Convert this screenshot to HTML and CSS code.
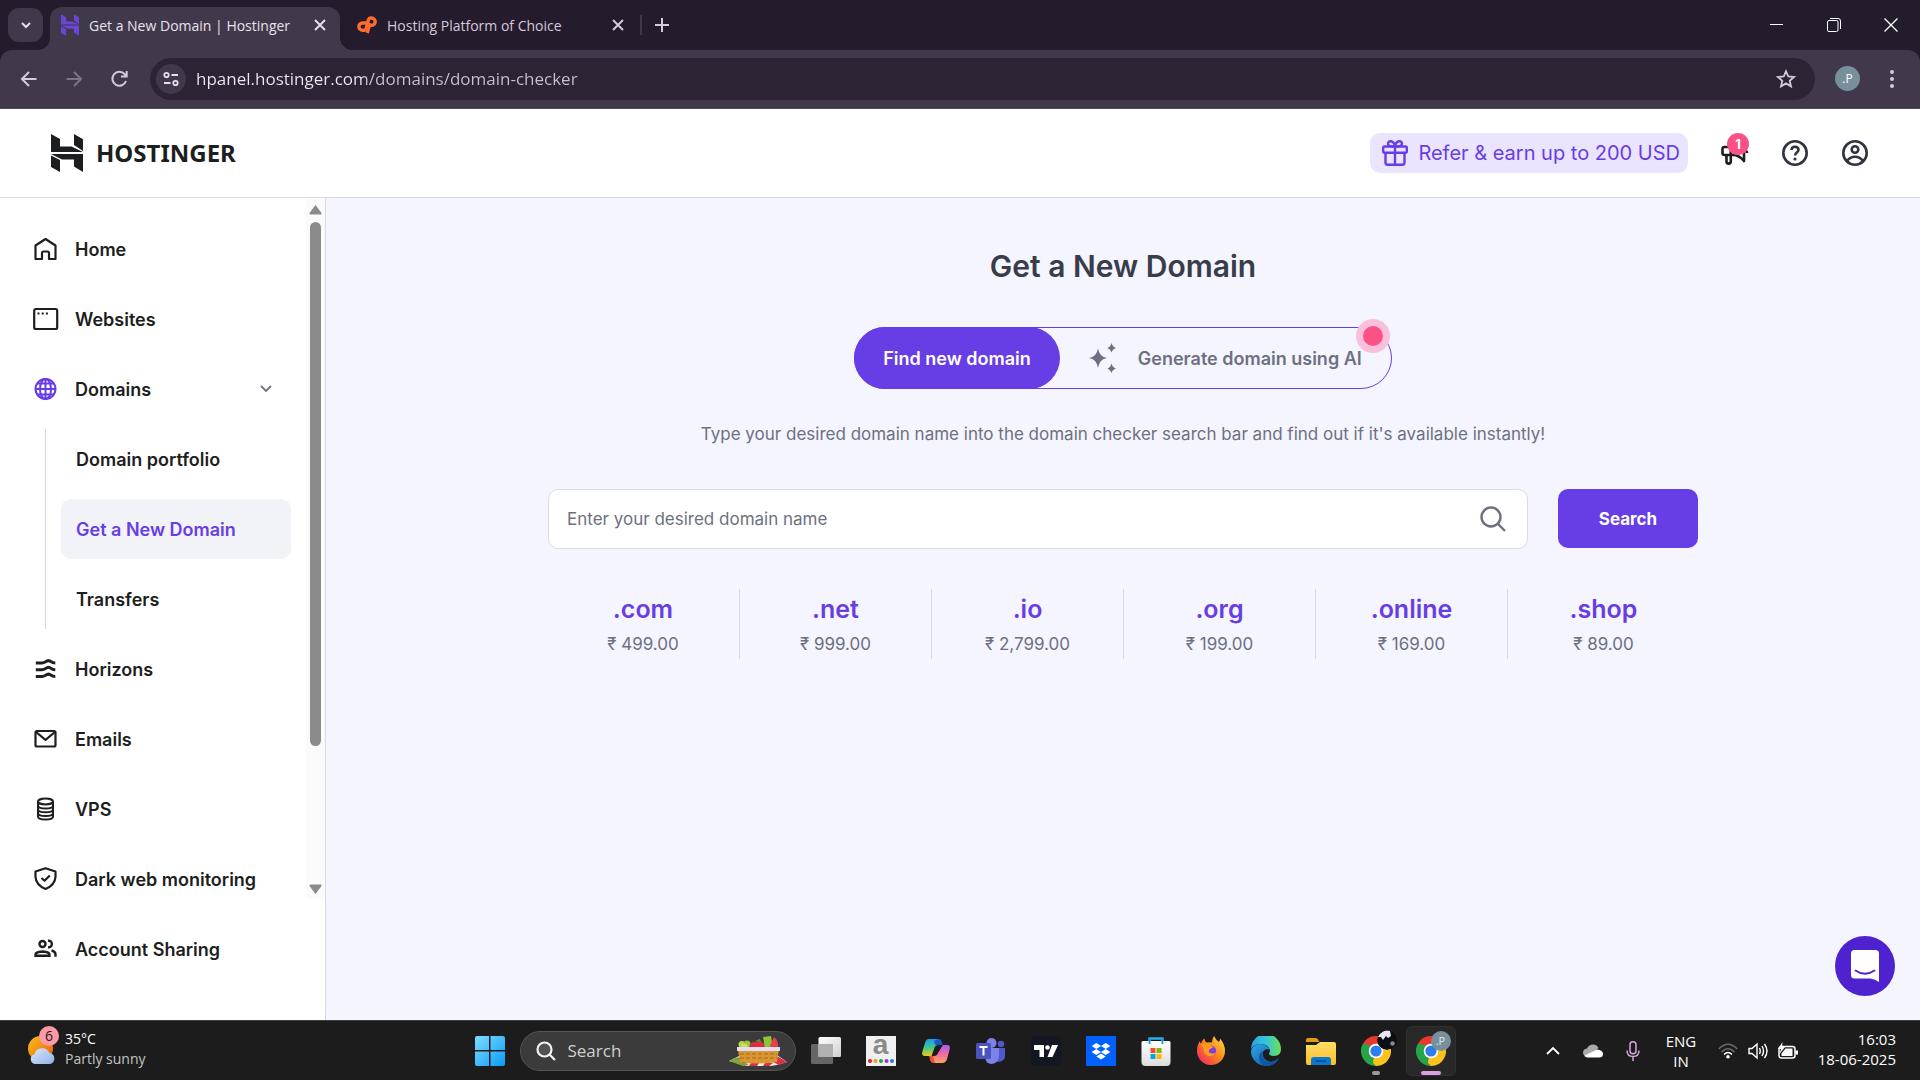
FILE: index.html
```html
<!DOCTYPE html>
<html lang="en">
<head>
<meta charset="utf-8">
<title>Get a New Domain | Hostinger</title>
<link rel="stylesheet" href="styles.css">
</head>
<body>
<svg class="defs" aria-hidden="true">
  <defs>
    <linearGradient id="gWin" x1="0" y1="0" x2="1" y2="1"><stop offset="0" stop-color="#7fdcff"/><stop offset="1" stop-color="#0a9bf7"/></linearGradient>
    <linearGradient id="gSun" x1="0" y1="0" x2="1" y2="1"><stop offset="0" stop-color="#f7c21f"/><stop offset="1" stop-color="#e8590c"/></linearGradient>
    <linearGradient id="gCloud" x1="0" y1="0" x2="1" y2="1"><stop offset="0" stop-color="#dbe8fa"/><stop offset="1" stop-color="#8fb2ea"/></linearGradient>
    <linearGradient id="gView" x1="0" y1="0" x2="1" y2="1"><stop offset="0" stop-color="#ffffff"/><stop offset="1" stop-color="#cfcfcf"/></linearGradient>
    <linearGradient id="gCopA" x1="0" y1="0" x2="0" y2="1"><stop offset="0" stop-color="#1a9df0"/><stop offset=".5" stop-color="#3fc98a"/><stop offset="1" stop-color="#f3c81c"/></linearGradient>
    <linearGradient id="gCopB" x1="0" y1="0" x2="0" y2="1"><stop offset="0" stop-color="#a65cf0"/><stop offset=".5" stop-color="#f06aa8"/><stop offset="1" stop-color="#ffa45a"/></linearGradient>
    <linearGradient id="gStore" x1="0" y1="0" x2="0" y2="1"><stop offset="0" stop-color="#ffffff"/><stop offset="1" stop-color="#dcdcdc"/></linearGradient>
    <linearGradient id="gFox" x1="1" y1="0" x2="0" y2="1"><stop offset="0" stop-color="#ffe14a"/><stop offset=".45" stop-color="#ff8a1c"/><stop offset="1" stop-color="#f5156c"/></linearGradient>
    <linearGradient id="gEdgeTop" x1="0" y1="0" x2="1" y2="0"><stop offset="0" stop-color="#2f9fe8"/><stop offset=".5" stop-color="#35c5dc"/><stop offset="1" stop-color="#6be04e"/></linearGradient>
    <linearGradient id="gEdgeLow" x1="0" y1="0" x2="1" y2="1"><stop offset="0" stop-color="#2fa8e8"/><stop offset="1" stop-color="#0b4f9c"/></linearGradient>
    <linearGradient id="gFolder" x1="0" y1="0" x2="0" y2="1"><stop offset="0" stop-color="#ffdd67"/><stop offset="1" stop-color="#fbbf26"/></linearGradient>
    <symbol id="chrome" viewBox="0 0 30 30">
      <path d="M15 15 2 7.500A15 15 0 0 1 28 7.500Z" fill="#e8392c"/>
      <path d="M15 15V30A15 15 0 0 1 2 7.500Z" fill="#27a34a"/>
      <path d="M15 15 28 7.500A15 15 0 0 1 15 30L12 27Z" fill="#fcc31e"/>
      <path d="M15 7.800H28.200L26 12H18Z" fill="#fcc31e"/>
      <path d="M2 7.500 8.700 19 12 17V10Z" fill="#27a34a"/>
      <path d="M21.300 19 15 30 12 24 15 20Z" fill="#fcc31e"/>
      <circle cx="15" cy="15" r="7.300" fill="#fff"/><circle cx="15" cy="15" r="5.600" fill="#2f7cf0"/>
    </symbol>
    <symbol id="hmark" viewBox="0 0 32 38">
      <path d="M0 0 9 5V12.500L20.500 12.600 32 18H0ZM23 11V0L32 5.300V17ZM23 38V25.500L11 25.400 0 20H32V38L23 32.500ZM0 21.500 9 26V38L0 33Z"/>
    </symbol>
  </defs>
</svg>

<header class="browser">
  <div class="tabstrip">
    <button class="tab-search" aria-label="Search tabs"><svg width="12" height="12" viewBox="0 0 12 12"><path d="M2 4 6 8 10 4" fill="none" stroke="#e6dfea" stroke-width="2"/></svg></button>
    <div class="tab tab-active">
      <svg class="favicon" width="18" height="24" viewBox="0 0 32 38" fill="#6747d4"><use href="#hmark"/></svg>
      <span class="tab-title">Get a New Domain | Hostinger</span>
      <button class="tab-close" aria-label="Close tab"><svg width="12" height="12" viewBox="0 0 12 12"><path d="M1 1 11 11M11 1 1 11" stroke="#e6dfea" stroke-width="2"/></svg></button>
    </div>
    <div class="tab">
      <svg class="favicon" width="20" height="18" viewBox="0 0 20 18" fill="none" stroke="#ff6c2c" stroke-width="3.400"><path d="M9.500 7H5.500A3.600 3.600 0 0 0 5.500 14.200H7.500Q8.600 14.200 9 13L11.500 3.500Q12 2 13.500 2H14.500A3.700 3.700 0 0 1 14.500 9.400H12.500"/><path d="M12.800 7 10.300 17"/></svg>
      <span class="tab-title">Hosting Platform of Choice</span>
      <button class="tab-close" aria-label="Close tab"><svg width="12" height="12" viewBox="0 0 12 12"><path d="M1 1 11 11M11 1 1 11" stroke="#d5c9dc" stroke-width="2"/></svg></button>
    </div>
    <span class="tab-rule"></span>
    <button class="tab-new" aria-label="New tab"><svg width="14" height="14" viewBox="0 0 14 14"><path d="M7 0V14M0 7H14" stroke="#d5c9dc" stroke-width="2"/></svg></button>
    <div class="window-controls">
      <button aria-label="Minimize"><svg width="14" height="14" viewBox="0 0 14 14"><path d="M0 6.500H13" stroke="#fff"/></svg></button>
      <button aria-label="Restore"><svg width="14" height="14" viewBox="0 0 14 14" fill="none" stroke="#fff"><rect x=".5" y="2.500" width="10.500" height="11" rx="1.500"/><path d="M3 .5H11Q13.500.5 13.500 3V11"/></svg></button>
      <button aria-label="Close"><svg width="14" height="14" viewBox="0 0 14 14"><path d="M.5.5 13.500 13.500M13.500.5.5 13.500" stroke="#fff" stroke-width="1.300"/></svg></button>
    </div>
  </div>
  <div class="toolbar">
    <button aria-label="Back"><svg width="20" height="20" viewBox="0 0 20 20" fill="none" stroke="#d5c9dc" stroke-width="2"><path d="M17.500 10H3.500M10 3 3 10 10 17"/></svg></button>
    <button aria-label="Forward"><svg width="20" height="20" viewBox="0 0 20 20" fill="none" stroke="#7d7387" stroke-width="2"><path d="M2.500 10H16.500M10 3 17 10 10 17"/></svg></button>
    <button aria-label="Reload"><svg width="20" height="20" viewBox="0 0 20 20" fill="none" stroke="#d5c9dc" stroke-width="2"><path d="M17 12A7 7 0 1 1 15.700 5.200L17.500 7M17.700 2V7.500H12"/></svg></button>
    <div class="omnibox">
      <button class="site-info" aria-label="View site information"><svg width="16" height="16" viewBox="0 0 16 16" fill="none" stroke="#e6dfea" stroke-width="1.800"><circle cx="3.500" cy="4" r="2.200"/><path d="M8.500 4H15M1 12H7.500"/><circle cx="12.500" cy="12" r="2.200"/></svg></button>
      <input class="address" type="text" aria-label="Address" value="hpanel.hostinger.com/domains/domain-checker">
      <button class="star" aria-label="Bookmark"><svg width="20" height="20" viewBox="0 0 20 20" fill="none" stroke="#d5c9dc" stroke-width="1.800"><path d="M10 2.300 12.300 7.500 18 8 13.700 11.800 15 17.300 10 14.400 5 17.300 6.300 11.800 2 8 7.700 7.500Z"/></svg></button>
    </div>
    <button class="profile" aria-label="Profile">.P</button>
    <button class="kebab" aria-label="Menu"><svg width="6" height="20" viewBox="0 0 6 20" fill="#d5c9dc"><circle cx="3" cy="3" r="2"/><circle cx="3" cy="10" r="2"/><circle cx="3" cy="17" r="2"/></svg></button>
  </div>
</header>

<header class="site-header">
  <a class="brand" href="#"><svg width="32" height="38" fill="#1d1e20"><use href="#hmark"/></svg><span>HOSTINGER</span></a>
  <div class="header-actions">
    <a class="refer" href="#">
      <svg width="26" height="26" viewBox="0 0 26 26" fill="none" stroke="#673de6" stroke-width="2.400" stroke-linejoin="round"><rect x="1.200" y="6.500" width="23.600" height="6.200" rx="1.500"/><path d="M3.500 12.700V22.500Q3.500 24.800 5.800 24.800H20.200Q22.500 24.800 22.500 22.500V12.700M13 6.500V24.500M13 6.500C6 6.500 6 4.800 6 3.700 6 0 12 0 13 6.500 14 0 20 0 20 3.700 20 4.800 20 6.500 13 6.500Z"/></svg>
      <span>Refer &amp; earn up to 200 USD</span>
    </a>
    <button class="icon-button" aria-label="Announcements">
      <svg width="28" height="24" viewBox="0 0 28 24" fill="none" stroke="#1d1e20" stroke-width="2.600" stroke-linejoin="round"><path d="M9 6H3.500Q1.500 6 1.500 8V12Q1.500 14 3.500 14H12Q18 14 23 20V2Q18 6 13 6Z"/><path d="M5.500 14V20.500Q5.500 22.600 7.500 22.600 9.800 22.600 9.800 20.500V6M23 9.500Q26 9.500 26 12"/></svg>
      <span class="badge">1</span>
    </button>
    <button class="icon-button" aria-label="Help"><svg width="26" height="26" viewBox="0 0 26 26" fill="none" stroke="#2f3440" stroke-width="2.600"><circle cx="13" cy="13" r="11.700"/><path d="M9.500 10Q9.700 6.800 13 6.800 16.500 6.900 16.500 10C16.500 12.200 13.200 12.300 13 15.500"/><circle cx="13" cy="19" r="1.600" fill="#2f3440" stroke="none"/></svg></button>
    <button class="icon-button" aria-label="Account"><svg width="26" height="26" viewBox="0 0 26 26" fill="none" stroke="#2f3440" stroke-width="2.600"><circle cx="13" cy="13" r="11.700"/><circle cx="13" cy="9.500" r="3.300"/><path d="M5 21Q8 16.800 13 16.800 18 16.800 21 21"/></svg></button>
  </div>
</header>

<div class="workspace">
  <aside class="sidebar">
    <nav class="nav">
      <a class="nav-item" href="#"><svg width="24" height="24" viewBox="0 0 24 24" fill="none" stroke="#1d1e20" stroke-width="2.200" stroke-linejoin="round"><path d="M2.500 8.500 12.500 2 22.500 8.500V22H16V16Q16 14.500 14.500 14.500H10.500Q9 14.500 9 16V22H2.500Z"/></svg><span>Home</span></a>
      <a class="nav-item" href="#"><svg width="26" height="24" viewBox="0 0 26 24" fill="none" stroke="#1d1e20" stroke-width="2.200"><rect x="1.200" y="2" width="23" height="20" rx="1.800"/><path d="M4.500 6.500H15" stroke-dasharray="2 2.200" stroke-width="2"/></svg><span>Websites</span></a>
      <a class="nav-item" href="#"><svg width="24" height="24" viewBox="0 0 24 24" fill="none" stroke="#673de6" stroke-width="2"><circle cx="12.500" cy="12" r="10"/><path d="M12.500 1.500V22.500M2 12H23M4 6.500H21M4 17.500H21"/><ellipse cx="12.500" cy="12" rx="5.500" ry="10"/></svg><span>Domains</span>
        <svg class="chevron" width="12" height="8" viewBox="0 0 12 8"><path d="M1 1 6 6 11 1" fill="none" stroke="#6d7081" stroke-width="1.800"/></svg></a>
      <div class="subnav">
        <a class="subnav-item" href="#">Domain portfolio</a>
        <a class="subnav-item subnav-active" href="#">Get a New Domain</a>
        <a class="subnav-item" href="#">Transfers</a>
      </div>
      <a class="nav-item" href="#"><svg width="24" height="24" viewBox="0 0 24 24" fill="none" stroke="#1d1e20" stroke-width="3"><path d="M2.800 6H9Q11.500 5.800 12.800 4.700 15.500 2.500 18 4.700 19.500 6 22.300 6M2.800 12.700H9Q11.500 12.500 12.800 11.400 15.500 9.200 18 11.400 19.500 12.700 22.300 12.700M2.800 19.500H9Q11.500 19.300 12.800 18.200 15.500 16 18 18.200 19.500 19.500 22.300 19.500"/></svg><span>Horizons</span></a>
      <a class="nav-item" href="#"><svg width="24" height="24" viewBox="0 0 24 24" fill="none" stroke="#1d1e20" stroke-width="2.200" stroke-linejoin="round"><rect x="2.500" y="4" width="20" height="15.500" rx="1.500"/><path d="M3 5 12.500 12.800 22 5"/></svg><span>Emails</span></a>
      <a class="nav-item" href="#"><svg width="24" height="24" viewBox="0 0 24 24" fill="none" stroke="#1d1e20" stroke-width="2"><ellipse cx="12.500" cy="4.500" rx="7.500" ry="2.900"/><path d="M5 4.500V19.500C5 23.500 20 23.500 20 19.500V4.500M5 8.500C5 12.500 20 12.500 20 8.500M5 12.200C5 16.200 20 16.200 20 12.200M5 16C5 20 20 20 20 16"/></svg><span>VPS</span></a>
      <a class="nav-item" href="#"><svg width="24" height="24" viewBox="0 0 24 24" fill="none" stroke="#1d1e20" stroke-width="2.200" stroke-linejoin="round"><path d="M12.500 1.200 22.500 4.500V10Q22 18 12.500 22 3 18 2.500 10V4.500Z"/><path d="M8.500 11 11.500 13.700 16.800 8.500"/></svg><span>Dark web monitoring</span></a>
      <a class="nav-item" href="#"><svg width="24" height="24" viewBox="0 0 24 24" fill="none" stroke="#1d1e20" stroke-width="2.400"><circle cx="9.500" cy="7" r="3"/><path d="M2.500 18.700V17.500Q2.500 15 9.500 14.500 16.500 15 16.500 17.500V18.700Z"/><path d="M15 3.800Q18.800 3.500 18.800 7 18.800 10.500 15 10.200M18.500 13.500Q22.500 14.500 22.500 17.500V19.700"/></svg><span>Account Sharing</span></a>
    </nav>
    <div class="scrollbar" aria-hidden="true">
      <svg width="13" height="10" viewBox="0 0 13 10"><path d="M6.500 0 12.500 8Q13 9.500 11.500 9.500H1.500Q0 9.500.5 8Z" fill="#8b8b8b"/></svg>
      <span class="thumb-track"><span class="thumb"></span></span>
      <svg width="13" height="10" viewBox="0 0 13 10"><path d="M6.500 10 12.500 2Q13 .5 11.500.5H1.500Q0 .5.5 2Z" fill="#8b8b8b"/></svg>
    </div>
  </aside>

  <main class="content">
    <h1>Get a New Domain</h1>
    <div class="mode-switch">
      <button class="mode mode-active">Find new domain</button>
      <button class="mode"><svg width="28" height="30" viewBox="0 0 28 30" fill="#6d7081"><path d="M9 5.500Q10.500 14 18 15 10.500 16 9 25 7.500 16 0 15 7.500 14 9 5.500ZM22.500 0Q23.500 4 27 5 23.500 6 22.500 9.500 21.500 6 18.500 5 21.500 4 22.500 0ZM22.500 20.500Q23.500 24.500 27 25.500 23.500 26.500 22.500 30 21.500 26.500 18.500 25.500 21.500 24.500 22.500 20.500Z"/></svg><span>Generate domain using AI</span></button>
      <span class="pulse"></span>
    </div>
    <p class="lead">Type your desired domain name into the domain checker search bar and find out if it's available instantly!</p>
    <form class="finder">
      <div class="finder-box">
        <input type="text" aria-label="Domain name" placeholder="Enter your desired domain name">
        <svg width="28" height="28" viewBox="0 0 28 28" fill="none" stroke="#6d7081" stroke-width="2.400"><circle cx="12" cy="12" r="9.500"/><path d="M18.500 18.500 26 26"/></svg>
      </div>
      <button type="button">Search</button>
    </form>
    <ul class="tlds">
      <li><strong>.com</strong><span>₹ 499.00</span></li>
      <li><strong>.net</strong><span>₹ 999.00</span></li>
      <li><strong>.io</strong><span>₹ 2,799.00</span></li>
      <li><strong>.org</strong><span>₹ 199.00</span></li>
      <li><strong>.online</strong><span>₹ 169.00</span></li>
      <li><strong>.shop</strong><span>₹ 89.00</span></li>
    </ul>
    <button class="chat" aria-label="Open chat"><svg width="28" height="32" viewBox="0 0 28 32"><path d="M3.500 0H24.500Q28 0 28 3.500V32Q24 29 19.500 28.500H3.500Q0 28.500 0 25V3.500Q0 0 3.500 0Z" fill="#fff"/><path d="M4.500 20.500Q14 27 23.500 20.500" fill="none" stroke="#4f22cf" stroke-width="1.800" stroke-linecap="round"/></svg></button>
  </main>
</div>

<footer class="taskbar">
  <div class="weather">
    <span class="weather-icon">
      <svg width="28" height="28" viewBox="0 0 28 28"><circle cx="12.500" cy="12.500" r="12.500" fill="url(#gSun)"/><path d="M7 28a5 5 0 0 1-.5-9.800A8 8 0 0 1 21.500 17 5.600 5.600 0 0 1 22 28Z" fill="url(#gCloud)"/></svg>
      <span class="weather-badge">6</span>
    </span>
    <span class="weather-text"><span>35°C</span><span class="dim">Partly sunny</span></span>
  </div>
  <div class="apps">
    <button class="app" aria-label="Start"><svg width="30" height="30" viewBox="0 0 30 30" fill="url(#gWin)"><path d="M2 0H14V14H0V2Q0 0 2 0ZM15.500 0H28Q30 0 30 2V14H15.500ZM0 15.500H14V30H2Q0 30 0 28ZM15.500 15.500H30V28Q30 30 28 30H15.500Z"/></svg></button>
    <div class="task-search">
      <svg width="20" height="20" viewBox="0 0 20 20" fill="#525252" stroke="#f2f2f2" stroke-width="2.200"><circle cx="8.500" cy="8.500" r="7"/><path d="M13.500 13.500 19 19"/></svg>
      <input type="text" aria-label="Search Windows" placeholder="Search">
      <svg width="58" height="30" viewBox="0 0 58 30">
        <path d="M0 25 12 19H48L58 26Q46 30 40 30H18Z" fill="#f4e9ea"/><path d="M0 25 9 21 20 29 14 30Z" fill="#7ea636"/><path d="M48 20 58 26 50 29 44 26ZM22 27H30L28 30H20ZM36 27H44L40 30H34ZM9 22H14L20 27H14Z" fill="#d8304a"/>
        <path d="M9 14H50L48 26Q29 29 11 26Z" fill="#d99732"/><path d="M11 18H48M11 22H48" stroke="#a9671a" stroke-width="1.200" stroke-dasharray="4 2"/>
        <circle cx="13" cy="8.500" r="3.500" fill="#b9d84a"/><circle cx="18" cy="8" r="3.500" fill="#9cc63a"/><circle cx="15.500" cy="10.500" r="3" fill="#c6df61"/>
        <path d="M20 11Q22 5 27 6 31 2 34 7 38 8 38 12H20Z" fill="#d92f3a"/><path d="M26 5 31 3 32 6Z" fill="#4b9b35"/><path d="M34 1 42 0 44 12H36Z" fill="#8fc33c"/><path d="M40 12 45 1Q50 5 49 12Z" fill="#e8414c"/>
        <path d="M8 11H51V15H8Z" fill="#e5dcf6"/>
      </svg>
    </div>
    <button class="app" aria-label="Task view"><svg width="30" height="30" viewBox="0 0 30 30"><rect x="0" y="8" width="22" height="20" rx="1.500" fill="#666"/><rect x="7.500" y="1" width="22.500" height="20" rx="1.500" fill="url(#gView)"/><path d="M7.500 8H22V21H7.500Z" fill="#b1b1b1"/></svg></button>
    <button class="app" aria-label="Amazon"><span class="amazon"><span class="amazon-letter">a</span><svg width="26" height="4" viewBox="0 0 26 4"><circle cx="2" cy="2" r="2" fill="#e02020"/><circle cx="7.500" cy="2" r="2" fill="#f59a1c"/><circle cx="13" cy="2" r="2" fill="#1ba34b"/><circle cx="18.500" cy="2" r="2" fill="#9137d9"/><circle cx="24" cy="2" r="2" fill="#1784e0"/></svg></span></button>
    <button class="app" aria-label="Copilot"><svg width="30" height="30" viewBox="0 0 30 30"><path d="M8 3H17Q20 3 21 7L17 9Q14 9 13 13L10.500 20H4Q0 20 1.500 15L4 7Q5 3 8 3Z" fill="url(#gCopA)"/><path d="M17 3Q20 3 21 7L22 9H15Q14 9 13 5Z" fill="#1b55c9"/><path d="M22 9H26Q30 9 28.500 14L26 23Q25 27 21 27H13Q10 27 9 23L10 20H13Q16 20 17 17Z" fill="url(#gCopB)"/><path d="M8 20H12L14 27H12Q9.500 26.500 9 23Z" fill="#e8552d"/></svg></button>
    <button class="app" aria-label="Teams"><svg width="30" height="30" viewBox="0 0 30 30"><circle cx="15.500" cy="7" r="5" fill="#7b83eb"/><circle cx="25" cy="8" r="3.200" fill="#5059c9"/><path d="M20 12H29V21Q28 26 21 26Z" fill="#5059c9"/><path d="M9 12H23V20Q22 28 15 28 9 27 9 20Z" fill="#7b83eb"/><rect x="0" y="7" width="15" height="16" rx="1.500" fill="#4b53bc"/><path d="M3.500 11H11.500M7.500 11V19.500" stroke="#fff" stroke-width="2"/></svg></button>
    <button class="app" aria-label="TradingView"><svg width="30" height="30" viewBox="0 0 30 30"><rect width="30" height="30" rx="5" fill="#131722"/><path d="M3 9H13V21H8.500V14H3Z" fill="#fff"/><circle cx="16.500" cy="11.500" r="2.300" fill="#fff"/><path d="M21 9H27L21.500 21H16.500Z" fill="#fff"/></svg></button>
    <button class="app" aria-label="Dropbox"><svg width="30" height="30" viewBox="0 0 30 30"><path d="M0 0H30V30H0Z" fill="#0061fe"/><path d="M10.300 7 15 10 10.300 13 5.600 10ZM19.700 7 24.400 10 19.700 13 15 10ZM10.300 13 15 16 10.300 19 5.600 16ZM19.700 13 24.400 16 19.700 19 15 16ZM15 17.500 19.700 20.500 15 23.500 10.300 20.500Z" fill="#fff"/></svg></button>
    <button class="app" aria-label="Store"><svg width="30" height="30" viewBox="0 0 30 30"><path d="M8.500 7V2.500H21.500V7" fill="none" stroke="#26b1ea" stroke-width="2.400"/><path d="M2 5H28Q29.500 5 29.500 6.500V26Q29.500 30 25.500 30H4.500Q.5 30 .5 26V6.500Q.5 5 2 5Z" fill="url(#gStore)"/><path d="M8.500 2.500V8M21.500 2.500V8" stroke="#1697d6" stroke-width="1.800"/><path d="M9.500 12H14.500V17H9.500Z" fill="#f25022"/><path d="M15.500 12H20.500V17H15.500Z" fill="#7fba00"/><path d="M9.500 18H14.500V23H9.500Z" fill="#00a4ef"/><path d="M15.500 18H20.500V23H15.500Z" fill="#ffb900"/></svg></button>
    <button class="app" aria-label="Firefox"><svg width="30" height="30" viewBox="0 0 30 30"><path d="M18 0Q20 4 23 6 24 4 24 2.500 29 8 29 15A14 14 0 0 1 1 15Q1 9 4 5 4 7 5 7.500 7 3 8.500 2.500 8.500 5.500 10.500 6.500 14 6 16 6.500 16 3 18 0Z" fill="url(#gFox)"/><circle cx="14.500" cy="15" r="5.600" fill="#7a3fe0"/><path d="M5 8Q11 6 14 9 17 10 17 11.500 14 12.500 13 14 12 17 16 17.500 18 17.500 20 16 17 22 12 20 7 18 8 13Z" fill="#ff9a1f"/></svg></button>
    <button class="app" aria-label="Edge"><svg width="30" height="30" viewBox="0 0 30 30"><path d="M0 13A15 15 0 0 1 30 13Q30 20 23 20 18 20 18 17.500 19 16 19 14 17 8 10 8 3 8 0 13Z" fill="url(#gEdgeTop)"/><path d="M0 15Q2 8 9.500 8 17 8.500 18.500 13.500 13 12 11.500 17 12 25 20 26Q24 26 28 22 24 30 15 30A15 15 0 0 1 0 15Z" fill="url(#gEdgeLow)"/><path d="M11.500 15Q10 22 15 25 20 27.500 28 22 24 30 15 30 8 28 8 21 8.500 17 11.500 15Z" fill="#0c58a4"/></svg></button>
    <button class="app" aria-label="File Explorer"><svg width="30" height="30" viewBox="0 0 30 30"><path d="M0 4Q0 2 2 2H10Q11 2 12 3.500L13.500 6H0Z" fill="#e19e0b"/><path d="M0 9H10L14 6H28Q30 6 30 8V27Q30 29 28 29H2Q0 29 0 27Z" fill="url(#gFolder)"/><path d="M5 29V24Q5 21 8 21H22Q25 21 25 24V29Z" fill="#0a78d0"/><path d="M9.500 25H20.500" stroke="#0a4c91" stroke-width="1.600"/></svg></button>
    <button class="app" aria-label="Chrome, first profile"><svg width="30" height="30"><use href="#chrome"/></svg><svg class="app-badge" width="20" height="20" viewBox="0 0 20 20"><circle cx="10" cy="10" r="10" fill="#0c1016"/><path d="M1 7A10 10 0 0 1 13 1L14 6 11 8 9 6 6 10 4 7Z" fill="#ece6f2"/><circle cx="15.500" cy="13.500" r="2.200" fill="#8f8794"/></svg><span class="run-dot"></span></button>
    <button class="app app-current" aria-label="Chrome, current profile"><svg width="30" height="30"><use href="#chrome"/></svg><span class="app-badge app-initial">.P</span><span class="run-bar"></span></button>
  </div>
  <div class="tray">
    <button class="tray-slot" aria-label="Hidden icons"><svg width="14" height="9" viewBox="0 0 14 9"><path d="M1 8 7 2 13 8" fill="none" stroke="#fff" stroke-width="1.800"/></svg></button>
    <button class="tray-slot" aria-label="OneDrive"><svg width="20" height="14" viewBox="0 0 20 14"><path d="M4 12.500Q0 12 0 8.500 0 5 4 4.500 6 .5 10 .5 14 .5 15.500 4 L6 12Z" fill="#a9a9a9"/><path d="M4 13.500Q1 12.500 1.500 11.500L14 5.500Q20 6 20 10 20 13.500 16 13.500Z" fill="#fff"/></svg></button>
    <button class="tray-slot" aria-label="Microphone"><svg width="14" height="20" viewBox="0 0 14 20" fill="none" stroke="#d9a4dd" stroke-width="1.500"><rect x="4" y=".8" width="6" height="12" rx="3"/><path d="M1 9.500Q1 15.500 7 15.500 13 15.500 13 9.500M7 15.500V20"/></svg></button>
    <span class="lang"><span>ENG</span><span>IN</span></span>
    <div class="status">
      <svg width="20" height="16" viewBox="0 0 20 16" fill="none" stroke="#fff" stroke-width="1.500"><path d="M.8 6Q10-3.500 19.200 6M3.500 9Q10 2.500 16.500 9" stroke="#6a6a6a"/><path d="M6 11.500Q10 7.500 14 11.500"/><circle cx="10" cy="13.800" r="1.800" fill="#fff" stroke="none"/></svg>
      <svg width="20" height="18" viewBox="0 0 20 18" fill="none" stroke="#fff" stroke-width="1.400"><path d="M1 6.500H4L9 2V16L4 11.500H1ZM11.500 6Q13 9 11.500 12M14 4Q17 9 14 14M16.500 2Q21.500 9 16.500 16"/></svg>
      <svg width="20" height="18" viewBox="0 0 20 18"><rect x="1" y="4.500" width="16" height="11.500" rx="2.500" fill="none" stroke="#fff" stroke-width="1.500"/><path d="M7.500 6.500H14.500V14H3.500V11.500Z" fill="#fff"/><path d="M17.500 8.500H20V12.500H17.500ZM4.500 0 0 7H3L1.500 12 7 5H4Z" fill="#fff"/></svg>
    </div>
    <span class="clock"><span>16:03</span><span>18-06-2025</span></span>
  </div>
</footer>
</body>
</html>
```
FILE: styles.css
```css
* { box-sizing: border-box; }

body {
  margin: 0;
  min-height: 100vh;
  display: flex;
  flex-direction: column;
  font-family: Inter, "Liberation Sans", sans-serif;
  color: #1d1e20;
}

button, input { font: inherit; color: inherit; }
button { display: flex; align-items: center; justify-content: center; padding: 0; border: 0; background: none; }
a { color: inherit; text-decoration: none; }
svg { display: block; flex: none; }
.defs { position: absolute; width: 0; height: 0; }

/* Browser frame */
.browser, .taskbar { font-family: "Open Sans", "Noto Sans", sans-serif; }
.browser { background: #241b2d; }
.tabstrip { display: flex; align-items: flex-end; height: 50px; padding: 0 1px 0 8px; font-size: 14px; }
.tab-search { width: 35px; height: 34px; margin: 0 7px 8px 0; border-radius: 11px; background: #42384b; }
.tab { position: relative; display: flex; align-items: center; width: 300px; height: 43px; padding: 0 16px 7px 17px; color: #d5c9dc; }
.tab-active { width: 290px; padding: 0 14px 7px 11px; border-radius: 12px 12px 0 0; background: #42384b; color: #e9e2ec; }
.tab-active::before, .tab-active::after { content: ""; position: absolute; bottom: 0; width: 12px; height: 12px; }
.tab-active::before { right: 100%; background: radial-gradient(circle at 0 0, transparent 12px, #42384b 12px); }
.tab-active::after { left: 100%; background: radial-gradient(circle at 100% 0, transparent 12px, #42384b 12px); }
.tab-title { flex: 1; white-space: nowrap; margin-left: 10px; }
.tab-close { height: 24px; }
.tab-rule { width: 2px; height: 20px; margin-bottom: 15px; background: #42384b; }
.tab-new { width: 40px; height: 34px; margin-bottom: 8px; }
.window-controls { display: flex; align-self: stretch; margin-left: auto; }
.window-controls button { width: 57px; height: 49px; }

.toolbar { display: flex; align-items: center; height: 59px; padding: 0 16px 1px 6px; border-radius: 12px 12px 0 0; background: #42384b; border-bottom: 1px solid #544a5c; }
.toolbar > button { width: 45px; height: 40px; }
.omnibox { flex: 1; display: flex; align-items: center; height: 42px; margin: 0 14px 0 9px; padding: 0 19px 0 6px; border-radius: 21px; background: #2c2334; }
.site-info { width: 30px; height: 30px; border-radius: 50%; background: #42384b; }
.address { flex: 1; padding: 0 0 0 10px; border: 0; font-size: 17px; color: transparent; background: linear-gradient(90deg, #f0eaf2 178px, #cbc0d0 178px) text; }
.toolbar > .profile { width: 25px; height: 25px; margin: 0 20px 0 6px; border-radius: 50%; background: #78909c; color: #fff; font-size: 12px; }
.toolbar > .kebab { width: 24px; }

/* Site header */
.site-header { display: flex; align-items: center; justify-content: space-between; height: 89px; padding: 0 52px 0 51px; background: #fff; border-bottom: 1px solid #d8d8e8; }
.brand { display: flex; align-items: center; gap: 13px; font: bold 24px/38px "Noto Sans", sans-serif; }
.header-actions { display: flex; align-items: center; gap: 33px; }
.refer { display: flex; align-items: center; gap: 10px; height: 40px; padding: 0 8px 0 12px; border-radius: 10px; background: #ebe4ff; color: #673de6; font-size: 20px; }
.icon-button { position: relative; width: 27px; height: 28px; }
.badge { position: absolute; top: -6px; left: 6px; width: 22px; height: 22px; border-radius: 50%; background: #fc5185; color: #fff; font: bold 13px/22px Inter, sans-serif; }

/* Workspace */
.workspace { flex: 1; display: flex; }
.sidebar { flex: none; display: flex; width: 326px; border-right: 1px solid #d8d8e8; background: #fff; font-size: 18px; font-weight: 600; }
.nav { flex: 1; display: flex; flex-direction: column; gap: 10px; padding: 21px 15px 10px 33px; }
.nav-item { display: grid; grid-template-columns: 42px 1fr auto; align-items: center; height: 60px; white-space: nowrap; }
.nav-item .chevron { margin-right: 19px; }
.subnav { display: flex; flex-direction: column; gap: 10px; margin-left: 12px; padding-left: 15px; border-left: 1px solid #d8d8de; }
.subnav-item { display: flex; align-items: center; height: 60px; padding-left: 15px; border-radius: 10px; }
.subnav-active { background: #f2f3f9; color: #673de6; }
.scrollbar { display: flex; flex-direction: column; align-items: center; gap: 7px; width: 19px; margin-bottom: 121px; padding: 7px 0 5px; background: #fbfbfb; }
.thumb-track { flex: 1; }
.thumb { display: block; width: 11px; height: 80%; border-radius: 6px; background: #8b8b8b; }

.content { position: relative; flex: 1; display: flex; flex-direction: column; align-items: center; padding: 48px 24px 24px; background: #f4f5ff; color: #6d7081; }
h1 { margin: 0; font-size: 30px; line-height: 40px; font-weight: 600; color: #393c49; }
.mode-switch { position: relative; display: flex; height: 62px; margin-top: 41px; border: 1px solid #673de6; border-radius: 31px; font-size: 18px; font-weight: 600; }
.mode { gap: 21px; padding: 0 29px; border-radius: 31px; color: #6d7081; white-space: nowrap; }
.mode-active { margin: -1px 0 -1px -1px; background: #673de6; color: #fff; }
.pulse { position: absolute; top: -9px; right: 1px; width: 34px; height: 34px; border: 7px solid #f9c0dc; border-radius: 50%; background: #fc5185; }
.lead { margin: 33px 0 43px; font-size: 17px; line-height: 24px; }
.finder { display: flex; gap: 30px; width: 100%; max-width: 1150px; }
.finder-box { flex: 1; display: flex; align-items: center; height: 60px; padding: 0 20px 0 18px; border: 1px solid #dadce0; border-radius: 10px; background: #fff; }
.finder-box input { flex: 1; padding: 0; border: 0; background: none; font-size: 17px; }
.finder-box input::placeholder { color: #6d7081; opacity: 1; }
.finder button { width: 140px; height: 59px; border-radius: 10px; background: #673de6; color: #fff; font-size: 17px; font-weight: 700; }
.tlds { display: grid; grid-template-columns: repeat(6, 1fr); width: 100%; max-width: 1152px; margin: 40px 0 0; padding: 0; list-style: none; }
.tlds li { display: flex; flex-direction: column; align-items: center; height: 70px; padding-top: 4px; gap: 7px; }
.tlds li + li { border-left: 1px solid #d8d8e8; }
.tlds strong { font-size: 25px; line-height: 32px; font-weight: 600; color: #673de6; }
.tlds span { font-size: 17px; line-height: 24px; }
.chat { position: absolute; right: 25px; bottom: 24px; width: 60px; height: 60px; border-radius: 50%; background: #4f22cf; }

/* Taskbar */
.taskbar { display: grid; grid-template-columns: 1fr auto 1fr; align-items: center; height: 60px; padding: 0 24px; border-top: 1px solid #3e3e3e; background: #1c1c1c; color: #fff; font-size: 15px; line-height: 20px; }
.weather { display: flex; align-items: center; gap: 9px; margin-left: 4px; padding-bottom: 3px; font-size: 14px; }
.weather-icon { position: relative; padding-top: 2px; }
.weather-badge { position: absolute; top: -8px; left: 11px; width: 20px; height: 20px; border-radius: 50%; background: #ff99a4; color: #1c1c1c; text-align: center; }
.weather-text { display: flex; flex-direction: column; }
.dim { color: #c4c4c4; }
.apps { display: flex; align-items: center; gap: 5px; }
.app { position: relative; width: 50px; height: 50px; border-radius: 6px; }
.app-current { background: #282828; border: 1px solid #303030; }
.app-badge { position: absolute; top: 4px; right: 4px; border-radius: 50%; }
.app-initial { width: 20px; height: 20px; background: #78909c; color: #dfe6ea; font-size: 11px; }
.run-dot, .run-bar { position: absolute; bottom: 1px; width: 8px; height: 4px; border-radius: 2px; background: #9a9a9a; }
.run-bar { bottom: 0; width: 20px; background: #d9a0e4; }
.amazon { display: flex; flex-direction: column; align-items: center; justify-content: flex-end; width: 30px; height: 30px; padding-bottom: 3px; background: #f0f0f0; }
.amazon-letter { color: #8a8a8a; font: bold 28px/28px "Liberation Sans", sans-serif; }
.task-search { display: flex; align-items: center; width: 276px; height: 40px; padding: 0 8px 0 15px; border: 1px solid #555; border-radius: 20px; background: #3b3b3b; }
.task-search input { flex: 1; min-width: 0; margin-left: 12px; padding: 0; border: 0; background: none; font-size: 17px; }
.task-search input::placeholder { color: #cfcfcf; opacity: 1; }
.tray { display: flex; align-items: center; justify-content: flex-end; }
.tray-slot { width: 40px; height: 40px; }
.lang { display: flex; flex-direction: column; align-items: center; width: 56px; }
.status { display: flex; align-items: center; gap: 10px; margin-left: 9px; }
.clock { display: flex; flex-direction: column; align-items: flex-end; width: 98px; padding-bottom: 3px; }
```
